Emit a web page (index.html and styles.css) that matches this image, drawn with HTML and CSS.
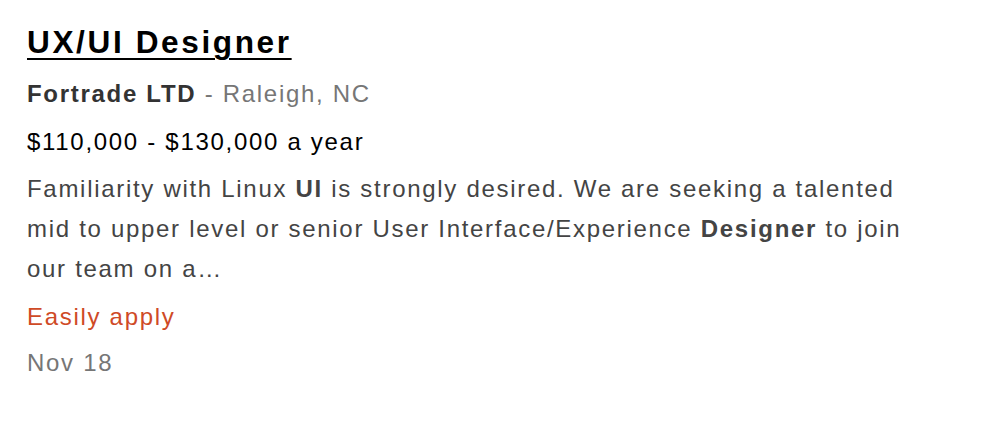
FILE: index.html
```html
<!DOCTYPE html>
<html>
<head>
<meta charset="utf-8">
<link rel="stylesheet" href="styles.css">
</head>
<body>
<div class="job">
  <h2 class="title"><a href="#" class="title-link">UX/UI Designer</a></h2>
  <div class="company"><span class="company-name">Fortrade LTD</span><span class="location"> - Raleigh, NC</span></div>
  <div class="salary">$110,000 - $130,000 a year</div>
  <div class="summary">Familiarity with Linux <b>UI</b> is strongly desired. We are seeking a talented mid to upper level or senior User Interface/Experience <b>Designer</b> to join our team on a…</div>
  <div class="apply">Easily apply</div>
  <div class="date">Nov 18</div>
</div>
</body>
</html>
```

FILE: styles.css
```css
html, body {
  margin: 0;
  padding: 0;
  background: #ffffff;
}
body {
  font-family: "Liberation Sans", Arial, Helvetica, sans-serif;
  font-size: 24px;
  line-height: 40px;
  letter-spacing: 1.7px;
}
.job {
  padding: 22px 0 0 27px;
  width: 905px;
}
.title {
  margin: 0 0 12px 0;
  font-size: 31.6px;
  line-height: 40px;
  font-weight: 700;
  letter-spacing: 2.6px;
}
.title-link {
  color: #000000;
  text-decoration: underline;
  text-decoration-thickness: 2px;
  text-underline-offset: 5px;
}
.company {
  margin-bottom: 8px;
}
.company-name {
  font-weight: 700;
  color: #333333;
}
.location {
  color: #767676;
}
.salary {
  color: #000000;
  margin-bottom: 7px;
}
.summary {
  color: #444444;
  margin-bottom: 8px;
}
.summary b {
  font-weight: 700;
}
.apply {
  color: #cf4a26;
  margin-bottom: 6px;
}
.date {
  color: #767676;
}
```
